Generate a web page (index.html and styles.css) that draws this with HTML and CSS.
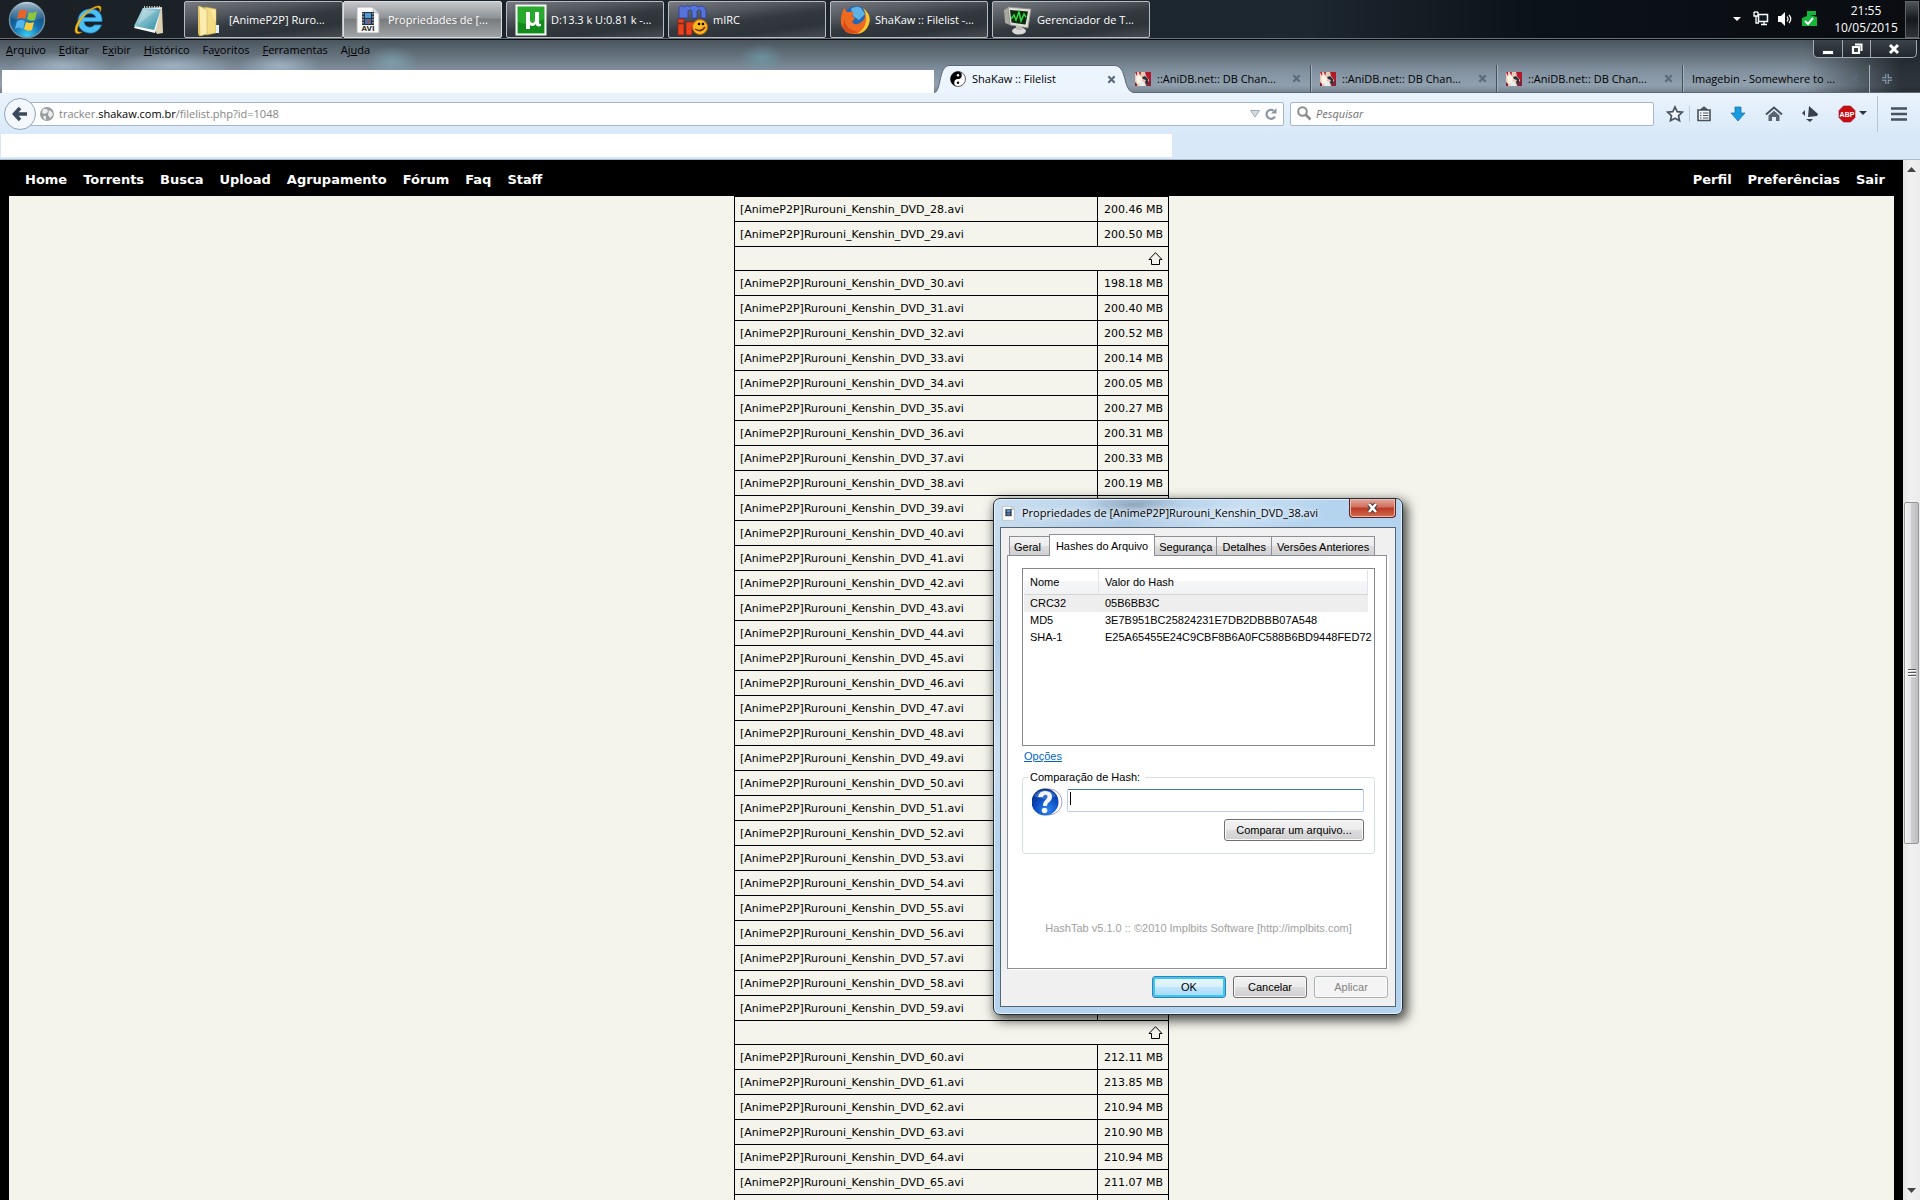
FILE: index.html
```html
<!DOCTYPE html>
<html lang="pt-BR">
<head>
<meta charset="utf-8">
<title>ShaKaw :: Filelist</title>
<link rel="stylesheet" href="styles.css">
</head>
<body>
<svg class="defs" aria-hidden="true">
  <symbol id="close-x" viewBox="0 0 10 10"><path d="M1.5 1.5l7 7M8.5 1.5l-7 7" stroke="currentColor" stroke-width="2.4"/></symbol>
  <symbol id="anidb" viewBox="0 0 16 14"><path fill="#e9c9b4" d="M0 0h16v14H0z"/><path fill="#b3182d" d="M10 0h6v14h-3l1-6-3-4zM0 0h2v4zM4 0h2L5 5z"/><path fill="#fff3e6" d="M1 5l3-3 3 4-1 5-4 1zM7 4h3l1 2-2 1z"/><path fill="#27303c" d="M7 5l3-1 3 3v4l-2 2-1-3 1-2-3-1z"/><path fill="#e8edf2" d="M6 9l3 1 1 4H4z"/><path fill="#812235" d="M0 10l2 2v2H0zM12 11l4-4v7h-5z"/></symbol>
  <symbol id="up-arrow" viewBox="0 0 15 13"><path d="M7.500.7L14 7.500H11.500V12.500H3.500V7.500H1z" fill="none" stroke="#000"/></symbol>
  <symbol id="avi" viewBox="0 0 24 28"><path d="M1 1h16l6 6v20H1z" fill="#fafafa" stroke="#a9adb0"/><path d="M17 1v6h6z" fill="#d6dadd" stroke="#aaa" stroke-width=".6"/><path d="M6 6h12v13H6z" fill="#26323f"/><path d="M9 7h6v5H9z" fill="#4f9bd4"/><path d="M9 13h6v5H9z" fill="#3a76b8"/><path d="M10 16l3-3 1 4z" fill="#c64b35"/><path d="M7 7v12M17 7v12" stroke="#eee" stroke-dasharray="1.500 1.500"/></symbol>
</svg>

<header class="taskbar">
  <div class="launchers">
    <button class="launch" aria-label="Iniciar">
      <svg width="38" height="38" viewBox="0 0 38 38"><defs><radialGradient id="orb" cx=".5" cy=".95" r=".9"><stop offset="0" stop-color="#38d0f8"/><stop offset=".45" stop-color="#1670ad"/><stop offset="1" stop-color="#113a63"/></radialGradient><linearGradient id="orbShine" x2="0" y2="1"><stop stop-color="#e4f1f8" stop-opacity=".75"/><stop offset="1" stop-color="#8fb6cc" stop-opacity=".12"/></linearGradient></defs><circle cx="19" cy="19" r="17.500" fill="url(#orb)" stroke="#6f8da0" stroke-width="1.500"/><path d="M3 17a16 16 0 0132 0Q19 23 3 17z" fill="url(#orbShine)"/><path d="M11 10q4-3 8 0l-2 8q-4-2-8 0z" fill="#e8622c"/><path d="M21 11q4 2 8-1l-2 9q-4 2-8-1z" fill="#8cc63f"/><path d="M9 20q4-2 8 0l-2 8q-4-3-8 0z" fill="#55b5ee"/><path d="M18 21q4 2 8 0l-2 8q-4 2-8-1z" fill="#fccb3a"/></svg>
    </button>
    <button class="launch" aria-label="Internet Explorer">
      <svg width="32" height="32" viewBox="0 0 32 32"><path d="M29 17.500H11c.4 6 7 7.400 10.500 3.500h7C26 27 21 29.500 16.500 29 9 28.500 4.500 23 5 16.500 5.500 9.500 11 5 17.500 5 25 5 29.500 10 29 17.500zM11.200 13.500h11.600c-.7-5-10.400-5.600-11.600 0z" fill="#4cc0f2" stroke="#1e86cc" stroke-width=".8"/><path d="M27 8c2-4 1-6.500-2-6C17 3 3 15 2 26c0 4 3 4.500 7 2-4 .8-5.500-.8-4.500-4C7 15 15 6.500 23 3.800c3-1 4.300.7 4 4.200z" fill="#fcc419" stroke="#c58c10" stroke-width=".6"/></svg>
    </button>
    <button class="launch" aria-label="Bloco de notas">
      <svg width="32" height="32" viewBox="0 0 32 32"><defs><linearGradient id="note" x2="1" y2="1"><stop stop-color="#c7e6ec"/><stop offset="1" stop-color="#2b8ba3"/></linearGradient></defs><path d="M11 4l19-1 1 26-6 1z" fill="#ddd2b0"/><path d="M11 4h18l-6 25-21-5z" fill="#f6fbfb"/><path d="M11 4l18 1-7 21-20-4z" fill="url(#note)"/><path d="M12 3h17" stroke="#c9c9c9" stroke-width="2" stroke-dasharray="1 1.500"/><path d="M12 6l12 1-18 13z" fill="#fff" opacity=".25"/></svg>
    </button>
  </div>
  <nav class="tasks" aria-label="Janelas abertas">
    <div class="task-group">
    <button class="task">
      <span class="task-icon"><svg width="32" height="32" viewBox="0 0 32 32"><path d="M5 2l8 2v26l-7 2-1-3z" fill="#e6c65c"/><path d="M12 3l11 2v24l-10 2z" fill="#f3dc84" stroke="#c8a746" stroke-width=".6"/><path d="M6 2l8 4v24l-7 2z" fill="#fbedb0" stroke="#d0b35b" stroke-width=".6"/><path d="M23 21h3v8h-3z" fill="#e1eef5"/><path d="M17 5l6 1v13z" fill="#fff2b5" opacity=".6"/></svg></span>
      <span>[AnimeP2P] Ruro...</span></button>
    <button class="task task-active">
      <span class="task-icon avi-icon"><svg width="24" height="28"><use href="#avi"/></svg><b>AVI</b></span>
      <span>Propriedades de [...</span></button>
    </div>
    <button class="task">
      <span class="task-icon"><svg width="32" height="32" viewBox="0 0 32 32"><path d="M1.500 1.500h29v29h-29z" fill="#28a82c" stroke="#f6f6f6" stroke-width="2"/><path d="M3 18q13 5 26-3v14H3z" fill="#138a1c"/><path d="M11 25V8h4v8c0 4 5 4 5 0V8h4v10c0 2 1 2 2 2v2c-3 1-5 0-5.500-2-1.500 2.500-4 2.500-5.500 1v4z" fill="#fff"/></svg></span>
      <span>D:13.3 k U:0.81 k -...</span></button>
    <button class="task">
      <span class="task-icon"><svg width="32" height="32" viewBox="0 0 32 32"><path d="M2 14V4q2-4 5-1 3-3 6 0 3-4 8 0 5-3 8 3v8h-5V7q-2-3-4 0v7h-5V7q-2-3-4 0v7z" fill="#5573d8" stroke="#27409a" stroke-width=".8"/><path d="M1 15h6v4H1zM1 20h6v11H1zM9 18h10v5h-4v8H9z" fill="#e8421c" stroke="#8f1e08" stroke-width=".7"/><circle cx="23" cy="23" r="7.500" fill="#fbb91e" stroke="#c0620c"/><path d="M18 25q6 4 10-2" fill="none" stroke="#702b08" stroke-width="1.500"/><circle cx="22" cy="20" r="1.300"/><circle cx="26" cy="20" r="1.300"/></svg></span>
      <span>mIRC</span></button>
    <button class="task">
      <span class="task-icon"><svg width="32" height="32" viewBox="0 0 32 32"><circle cx="17" cy="14" r="12" fill="#2667b5"/><path d="M12 5q5-4 10-1l4 6-6 6-6-4z" fill="#5fb3e4"/><path d="M5 4l3 4 7 0-2 4 3 2-3 4q3 4 8 1 6-3 5-10 4 4 3 9-2 10-12 12Q5 31 2 20 1 12 5 4z" fill="#ed6a20"/><path d="M24 4q9 7 6 16-3 9-12 10 8-5 9-13 1-7-3-13z" fill="#fbc52d"/><path d="M5 15q2 11 14 13-10 4-15-4z" fill="#c93a16" opacity=".6"/></svg></span>
      <span>ShaKaw :: Filelist -...</span></button>
    <button class="task">
      <span class="task-icon"><svg width="32" height="32" viewBox="0 0 32 32"><path d="M3 6l5-3 1 18-5-2z" fill="#a8a8a0"/><path d="M7 3l23 2-3 19-18-3z" fill="#deded6" stroke="#8a8a84" stroke-width=".8"/><path d="M9 6l18 1.500-2.500 13-14-2z" fill="#0c2b10"/><path d="M10 15l3-4 2 5 3-8 2 9 3-7 2 3" fill="none" stroke="#38d640" stroke-width="1.500"/><ellipse cx="18" cy="27" rx="7" ry="3.500" fill="#d9d9d6"/><path d="M15 22h6v4h-6z" fill="#bdbdb9"/></svg></span>
      <span>Gerenciador de T...</span></button>
  </nav>
  <div class="tray">
    <svg width="8" height="4" viewBox="0 0 8 4"><path d="M0 0h8L4 4z" fill="#fff"/></svg>
    <svg class="tray-net" width="16" height="16" viewBox="0 0 16 16"><path d="M5.500 3.500h9v7h-9z" fill="#111a22" stroke="#fff" stroke-width="1.500"/><path d="M8 13.500h6M11 11v3M1 1v4h4V1M3 5v7h3M2 0v2M4 0v2" stroke="#fff" fill="none" stroke-width="1.300"/></svg>
    <svg width="16" height="16" viewBox="0 0 16 16"><path d="M1 5h3l4-4v14l-4-4H1z" fill="#fff"/><path d="M10 5.500q2 2.500 0 5M12 4q3.500 4 0 8" fill="none" stroke="#fff" stroke-width="1.200"/></svg>
    <svg width="17" height="17" viewBox="0 0 17 17"><path d="M1 8l5-2V1h9v4H9l7 2v9H1z" fill="#15b53d"/><path d="M4 11l3 3 5-6" fill="none" stroke="#fff" stroke-width="2"/></svg>
    <time class="clock">21:55<br>10/05/2015</time>
  </div>
  <button class="show-desktop" aria-label="Mostrar área de trabalho"></button>
</header>

<div class="browser-top">
  <div class="menu-line">
    <nav class="menus" aria-label="Menu">
      <button><u>A</u>rquivo</button><button><u>E</u>ditar</button><button>E<u>x</u>ibir</button><button><u>H</u>istórico</button><button>Fa<u>v</u>oritos</button><button><u>F</u>erramentas</button><button>Aj<u>u</u>da</button>
    </nav>
    <div class="win-buttons">
      <button aria-label="Minimizar"><svg width="12" height="12"><path d="M.5 7.500h11v4H.5z" fill="#fff" stroke="#333b4a"/></svg></button>
      <button aria-label="Restaurar"><svg width="12" height="12" viewBox="0 0 12 12"><path d="M4 1.500h6.500V8" fill="none" stroke="#fff" stroke-width="2"/><path d="M2 4h6v6H2z" fill="#323a46" stroke="#fff" stroke-width="2.200"/></svg></button>
      <button class="win-close" aria-label="Fechar"><svg width="12" height="12" viewBox="0 0 12 12"><path d="M2 2l8 8M10 2l-8 8" stroke="#fff" stroke-width="3"/></svg></button>
    </div>
  </div>
  <div class="tab-line">
    <div class="blank-tabs"></div>
    <div class="tab tab-on">
      <svg class="tab-shape" width="200" height="28" viewBox="0 0 200 28"><path d="M0 28C8 26 4 0 16 0.500H180C194 0.500 188 26 200 27.500V29H0z" fill="#ecf4fd" stroke="#59677a"/></svg>
      <svg class="fav" width="16" height="16" viewBox="0 0 16 16"><circle cx="8" cy="8" r="7.500" fill="#fff" stroke="#222" stroke-width=".7"/><path d="M8 .5a7.500 7.500 0 000 15 3.750 3.750 0 010-7.500 3.750 3.750 0 000-7.500z"/><circle cx="8" cy="4.200" r="1.200" fill="#fff"/><circle cx="8" cy="11.800" r="1.200"/></svg>
      <span>ShaKaw :: Filelist</span>
      <button aria-label="Fechar aba"><svg width="9" height="9"><use href="#close-x"/></svg></button>
    </div>
    <div class="tab tab-first"><svg class="fav" width="16" height="14"><use href="#anidb"/></svg><span>::AniDB.net:: DB Chan...</span><button aria-label="Fechar aba"><svg width="9" height="9"><use href="#close-x"/></svg></button></div>
    <div class="tab"><svg class="fav" width="16" height="14"><use href="#anidb"/></svg><span>::AniDB.net:: DB Chan...</span><button aria-label="Fechar aba"><svg width="9" height="9"><use href="#close-x"/></svg></button></div>
    <div class="tab"><svg class="fav" width="16" height="14"><use href="#anidb"/></svg><span>::AniDB.net:: DB Chan...</span><button aria-label="Fechar aba"><svg width="9" height="9"><use href="#close-x"/></svg></button></div>
    <div class="tab"><span>Imagebin - Somewhere to ...</span><button aria-label="Fechar aba"><svg width="9" height="9"><use href="#close-x"/></svg></button></div>
    <button class="new-tab" aria-label="Nova aba"><svg width="12" height="12" viewBox="0 0 12 12"><path d="M6 1v10M1 6h10" stroke="#93a4b4" stroke-width="3.500"/><path d="M6 1v10M1 6h10" stroke="#3b4a58" stroke-width="1.500"/></svg></button>
  </div>
</div>

<div class="toolbar">
  <div class="tool-line">
    <button class="back" aria-label="Voltar"><svg width="16" height="16" viewBox="0 0 16 16"><path d="M8 2L2.500 8 8 14M3 8h12" fill="none" stroke="#3a4a5b" stroke-width="3.600"/></svg></button>
    <div class="urlbar">
      <svg width="14" height="14" viewBox="0 0 14 14"><circle cx="7" cy="7" r="7" fill="#9a9da0"/><path d="M3 2l4 0 1 3-3 2-3-1zM9 3l3 2 1 3-3 3-2-3zM3 9l3 0 0 4-2-1z" fill="#eceded"/></svg>
      <span class="url">tracker.<b>shakaw.com.br</b>/filelist.php?id=1048</span>
      <svg width="10" height="8" viewBox="0 0 10 8"><path d="M.5.5h9L5 7z" fill="#d3dae2" stroke="#9cabb9"/></svg>
      <button aria-label="Recarregar"><svg width="12" height="12" viewBox="0 0 12 12"><path d="M10 8.500A4.500 4.500 0 118.500 2.500" fill="none" stroke="#8797a7" stroke-width="2.200"/><path d="M11.500 0v5.500H6z" fill="#8797a7"/></svg></button>
    </div>
    <label class="search">
      <svg width="15" height="15" viewBox="0 0 15 15"><circle cx="5.500" cy="5.500" r="4.300" fill="none" stroke="#8c8c8c" stroke-width="2"/><path d="M8.500 8.500l5 5" stroke="#8c8c8c" stroke-width="2.600"/></svg>
      <input type="text" placeholder="Pesquisar" aria-label="Pesquisar">
    </label>
    <div class="tools">
      <button aria-label="Favoritar"><svg width="18" height="18" viewBox="0 0 18 18"><path d="M9 2l2.200 4.600 5 .6-3.700 3.500 1 5L9 13.200l-4.500 2.500 1-5L1.800 7.200l5-.6z" fill="#f3f7fb" stroke="#46525e" stroke-width="1.700"/></svg></button>
      <button class="tool-sep" aria-label="Favoritos"><svg width="16" height="16" viewBox="0 0 16 16"><path d="M2 4h12v10.500H2z" fill="#f3f7fb" stroke="#46525e" stroke-width="1.600"/><path d="M4.500 3.500L8 .8l3.500 2.700z" fill="#46525e" stroke="#46525e"/><path d="M4 7h1.500M7 7h5.500M4 9.500h1.500M7 9.500h5.500M4 12h1.500M7 12h5.500" stroke="#46525e" stroke-width="1.200"/></svg></button>
      <button aria-label="Downloads"><svg width="16" height="16" viewBox="0 0 16 16"><path d="M5 1h6v6h4l-7 8-7-8h4z" fill="#1b9bdf" stroke="#0f6ca6" stroke-width=".7"/></svg></button>
      <button aria-label="Início"><svg width="18" height="16" viewBox="0 0 18 16"><path d="M1 8.500L9 1.500l8 7" fill="none" stroke="#46525e" stroke-width="2"/><path d="M3.500 9.500L9 4.800l5.500 4.700V15H11v-4H7v4H3.500z" fill="#5a6570"/></svg></button>
      <button aria-label="Extensão"><svg width="18" height="17" viewBox="0 0 18 17"><path d="M8 1l9 8-1 2-9 1z" fill="#39424c"/><path d="M4 5v6L1 8zM5 14h7l-3 3z" fill="#39424c"/></svg></button>
      <button class="abp" aria-label="Adblock Plus"><svg width="18" height="18" viewBox="0 0 18 18"><path d="M5.500 1h7L17 5.500v7L12.500 17h-7L1 12.500v-7z" fill="#c90d14" stroke="#9b0a10" stroke-width=".6"/><text x="9" y="12" text-anchor="middle" font-family="Liberation Sans, sans-serif" font-size="7" font-weight="bold" fill="#fff">ABP</text></svg><svg width="8" height="5"><path d="M0 0h8L4 4z" fill="#2c3640"/></svg></button>
      <button class="menu-button" aria-label="Abrir menu"><svg width="16" height="14" viewBox="0 0 16 14"><path d="M0 1.500h16M0 7h16M0 12.500h16" stroke="#46525e" stroke-width="2.400"/></svg></button>
    </div>
  </div>
  <div class="blank-bookmarks"></div>
</div>

<div class="viewport">
  <main class="page">
    <nav class="site-nav">
      <div><a href="#home">Home</a><a href="#torrents">Torrents</a><a href="#busca">Busca</a><a href="#upload">Upload</a><a href="#agrupamento">Agrupamento</a><a href="#forum">Fórum</a><a href="#faq">Faq</a><a href="#staff">Staff</a></div>
      <div><a href="#perfil">Perfil</a><a href="#preferencias">Preferências</a><a href="#sair">Sair</a></div>
    </nav>
    <div class="content">
      <table class="files">
        <colgroup><col><col class="size"></colgroup>
        <tbody>
        <tr><td>[AnimeP2P]Rurouni_Kenshin_DVD_28.avi</td><td>200.46 MB</td></tr>
        <tr><td>[AnimeP2P]Rurouni_Kenshin_DVD_29.avi</td><td>200.50 MB</td></tr>
        <tr class="top-row"><td colspan="2"><a href="#home" aria-label="Topo"><svg width="15" height="13"><use href="#up-arrow"/></svg></a></td></tr>
        <tr><td>[AnimeP2P]Rurouni_Kenshin_DVD_30.avi</td><td>198.18 MB</td></tr>
        <tr><td>[AnimeP2P]Rurouni_Kenshin_DVD_31.avi</td><td>200.40 MB</td></tr>
        <tr><td>[AnimeP2P]Rurouni_Kenshin_DVD_32.avi</td><td>200.52 MB</td></tr>
        <tr><td>[AnimeP2P]Rurouni_Kenshin_DVD_33.avi</td><td>200.14 MB</td></tr>
        <tr><td>[AnimeP2P]Rurouni_Kenshin_DVD_34.avi</td><td>200.05 MB</td></tr>
        <tr><td>[AnimeP2P]Rurouni_Kenshin_DVD_35.avi</td><td>200.27 MB</td></tr>
        <tr><td>[AnimeP2P]Rurouni_Kenshin_DVD_36.avi</td><td>200.31 MB</td></tr>
        <tr><td>[AnimeP2P]Rurouni_Kenshin_DVD_37.avi</td><td>200.33 MB</td></tr>
        <tr><td>[AnimeP2P]Rurouni_Kenshin_DVD_38.avi</td><td>200.19 MB</td></tr>
        <tr><td>[AnimeP2P]Rurouni_Kenshin_DVD_39.avi</td><td></td></tr>
        <tr><td>[AnimeP2P]Rurouni_Kenshin_DVD_40.avi</td><td></td></tr>
        <tr><td>[AnimeP2P]Rurouni_Kenshin_DVD_41.avi</td><td></td></tr>
        <tr><td>[AnimeP2P]Rurouni_Kenshin_DVD_42.avi</td><td></td></tr>
        <tr><td>[AnimeP2P]Rurouni_Kenshin_DVD_43.avi</td><td></td></tr>
        <tr><td>[AnimeP2P]Rurouni_Kenshin_DVD_44.avi</td><td></td></tr>
        <tr><td>[AnimeP2P]Rurouni_Kenshin_DVD_45.avi</td><td></td></tr>
        <tr><td>[AnimeP2P]Rurouni_Kenshin_DVD_46.avi</td><td></td></tr>
        <tr><td>[AnimeP2P]Rurouni_Kenshin_DVD_47.avi</td><td></td></tr>
        <tr><td>[AnimeP2P]Rurouni_Kenshin_DVD_48.avi</td><td></td></tr>
        <tr><td>[AnimeP2P]Rurouni_Kenshin_DVD_49.avi</td><td></td></tr>
        <tr><td>[AnimeP2P]Rurouni_Kenshin_DVD_50.avi</td><td></td></tr>
        <tr><td>[AnimeP2P]Rurouni_Kenshin_DVD_51.avi</td><td></td></tr>
        <tr><td>[AnimeP2P]Rurouni_Kenshin_DVD_52.avi</td><td></td></tr>
        <tr><td>[AnimeP2P]Rurouni_Kenshin_DVD_53.avi</td><td></td></tr>
        <tr><td>[AnimeP2P]Rurouni_Kenshin_DVD_54.avi</td><td></td></tr>
        <tr><td>[AnimeP2P]Rurouni_Kenshin_DVD_55.avi</td><td></td></tr>
        <tr><td>[AnimeP2P]Rurouni_Kenshin_DVD_56.avi</td><td></td></tr>
        <tr><td>[AnimeP2P]Rurouni_Kenshin_DVD_57.avi</td><td></td></tr>
        <tr><td>[AnimeP2P]Rurouni_Kenshin_DVD_58.avi</td><td></td></tr>
        <tr><td>[AnimeP2P]Rurouni_Kenshin_DVD_59.avi</td><td></td></tr>
        <tr class="top-row"><td colspan="2"><a href="#home" aria-label="Topo"><svg width="15" height="13"><use href="#up-arrow"/></svg></a></td></tr>
        <tr><td>[AnimeP2P]Rurouni_Kenshin_DVD_60.avi</td><td>212.11 MB</td></tr>
        <tr><td>[AnimeP2P]Rurouni_Kenshin_DVD_61.avi</td><td>213.85 MB</td></tr>
        <tr><td>[AnimeP2P]Rurouni_Kenshin_DVD_62.avi</td><td>210.94 MB</td></tr>
        <tr><td>[AnimeP2P]Rurouni_Kenshin_DVD_63.avi</td><td>210.90 MB</td></tr>
        <tr><td>[AnimeP2P]Rurouni_Kenshin_DVD_64.avi</td><td>210.94 MB</td></tr>
        <tr><td>[AnimeP2P]Rurouni_Kenshin_DVD_65.avi</td><td>211.07 MB</td></tr>
        <tr><td></td><td></td></tr>
        </tbody>
      </table>
    </div>
  </main>
  <div class="scrollbar" aria-hidden="true">
    <svg width="9" height="5"><path d="M4.500 0L9 5H0z" fill="#444"/></svg>
    <div class="track"><div class="thumb"><i></i><i></i><i></i></div></div>
    <svg width="9" height="5"><path d="M0 0h9L4.500 5z" fill="#444"/></svg>
  </div>
</div>

<section class="dialog" role="dialog" aria-labelledby="dialog-title">
  <header class="dialog-title">
    <svg width="13" height="15" viewBox="0 0 24 28"><use href="#avi"/></svg>
    <h1 id="dialog-title">Propriedades de [AnimeP2P]Rurouni_Kenshin_DVD_38.avi</h1>
    <button class="dialog-close" aria-label="Fechar"><svg width="13" height="12" viewBox="0 0 13 12"><path d="M3 2l7 8M10 2l-7 8" stroke="#4a3434" stroke-width="4.500"/><path d="M3 2l7 8M10 2l-7 8" stroke="#fff" stroke-width="2.600"/></svg></button>
  </header>
  <div class="dialog-body">
    <div class="dialog-tabs" role="tablist">
      <button role="tab">Geral</button><button role="tab" class="selected" aria-selected="true">Hashes do Arquivo</button><button role="tab">Segurança</button><button role="tab">Detalhes</button><button role="tab">Versões Anteriores</button>
    </div>
    <div class="panel">
      <div class="hash-list">
        <table>
          <colgroup><col class="name"><col></colgroup>
          <thead><tr><th>Nome</th><th>Valor do Hash</th></tr></thead>
          <tbody>
            <tr class="current"><td>CRC32</td><td>05B6BB3C</td></tr>
            <tr><td>MD5</td><td>3E7B951BC25824231E7DB2DBBB07A548</td></tr>
            <tr><td>SHA-1</td><td>E25A65455E24C9CBF8B6A0FC588B6BD9448FED72</td></tr>
          </tbody>
        </table>
      </div>
      <a class="options" href="#opcoes">Opções</a>
      <fieldset>
        <legend><label for="hash">Comparação de Hash:</label></legend>
        <div class="compare">
          <svg width="32" height="32" viewBox="0 0 32 32"><defs><radialGradient id="ask" cx=".6" cy=".8" r=".8"><stop stop-color="#2b86ee"/><stop offset=".6" stop-color="#0c49bd"/><stop offset="1" stop-color="#072c84"/></radialGradient></defs><circle cx="17" cy="16" r="13" fill="#fff" stroke="#a6a4d4"/><circle cx="13" cy="16" r="13.500" fill="url(#ask)"/><path d="M2 10a13 13 0 0122 0q-12 6-22 0z" fill="#6fa0e8" opacity=".45"/><path d="M6 11q1-6 7-6 7 0 7 6c0 5-5 5-5 9h-4c0-6 4.500-6.500 4.500-9.500 0-2.500-4-2.500-4.500.5z" fill="#f4f6fb"/><circle cx="12.500" cy="24.500" r="2.800" fill="#f4f6fb"/></svg>
          <div class="hash-field"><input id="hash" type="text"><i class="caret"></i></div>
        </div>
        <button class="push compare-file">Comparar um arquivo...</button>
      </fieldset>
      <p class="credit">HashTab v5.1.0 :: ©2010 Implbits Software [http://implbits.com]</p>
    </div>
    <div class="dialog-buttons"><button class="push default">OK</button><button class="push">Cancelar</button><button class="push" disabled>Aplicar</button></div>
  </div>
</section>
</body>
</html>
```
FILE: styles.css
```css
* { box-sizing: border-box; }
html, body { height: 100%; }
body {
  margin: 0;
  display: flex;
  flex-direction: column;
  overflow: hidden;
  font: 11px/16px "Open Sans", "Noto Sans", sans-serif;
  color: #000;
}
button { font: inherit; color: inherit; background: none; border: 0; padding: 0; margin: 0; }
svg { display: block; flex: none; }
.defs { position: absolute; width: 0; height: 0; }

/* Windows taskbar */
.taskbar {
  display: flex;
  height: 40px;
  flex: none;
  background: linear-gradient(90deg, #1a2026, #1d262e 50%, #1d272f 68%, #0b1219 80%, #0a0c10);
  border-bottom: 1px solid #050709;
  box-shadow: inset 0 -1px #66717a;
  color: #fff;
}
.launchers { display: flex; align-items: center; gap: 27px; width: 184px; padding-left: 8px; }
.tasks { display: flex; gap: 4px; padding-top: 1px; height: 38px; }
.task-group { display: flex; }
.task {
  display: flex;
  align-items: center;
  gap: 4px;
  width: 158px;
  padding-left: 8px;
  border: 1px solid #b8bcc0;
  border-radius: 2px;
  background: linear-gradient(172deg, #777a80, #53575e 30%, #33393f 52%, #2c3339 75%, #474c51);
  white-space: nowrap;
}
.task-group .task { width: 159px; }
.task-group .task-active { background: linear-gradient(#c4c6c8, #909396 45%, #797c7e 50%, #a0a3a5); border-color: #dcdfe1; }
.task-icon { width: 32px; height: 32px; }
.avi-icon { display: flex; align-items: center; flex-direction: column; padding-top: 2px; }
.avi-icon b { font: bold 7px/7px "DejaVu Sans", sans-serif; color: #333; margin-top: -8px; }
.tray { display: flex; align-items: center; gap: 8px; margin-left: auto; padding-bottom: 2px; }
.tray-net { margin-left: 4px; }
.clock { width: 72px; margin-left: 4px; text-align: center; font-size: 12px; line-height: 17px; }
.show-desktop { width: 14px; margin: 1px 1px 1px 3px; border: 1px solid #60666c; background: linear-gradient(#4d5359, #15191d 50%, #30353a); }

/* Firefox frame */
.browser-top {
  flex: none;
  height: 53px;
  background:
    linear-gradient(90deg, transparent 94%, rgba(12, 16, 20, .75) 99%),
    radial-gradient(ellipse 50px 14px at 62px 26px, rgba(175, 195, 212, .7), transparent),
    radial-gradient(ellipse 60px 14px at 174px 26px, rgba(175, 195, 212, .7), transparent),
    radial-gradient(ellipse 40px 14px at 280px 26px, rgba(175, 195, 212, .7), transparent),
    radial-gradient(ellipse 26px 16px at 392px 22px, rgba(130, 175, 190, .6), transparent),
    radial-gradient(ellipse 22px 14px at 762px 18px, rgba(110, 165, 180, .6), transparent),
    linear-gradient(#4a555d, #66737e 30%, #8392a0 60%, #91a0ae 85%, #75828f);
}
.menu-line { display: flex; justify-content: space-between; height: 25px; }
.menus { display: flex; gap: 13px; padding-left: 6px; height: 20px; text-shadow: 0 0 5px #ccd3da, 0 0 5px #b9c1c9; }
.win-buttons { display: flex; height: 18px; margin-right: 3px; border: 1px solid #a3abb2; border-top: 0; border-radius: 0 0 5px 5px; background: linear-gradient(#3a4148, #22282e); }
.win-buttons button { width: 28px; display: grid; place-items: center; }
.win-buttons button + button { border-left: 1px solid #a3abb2; }
.win-buttons .win-close { width: 46px; }
.tab-line { display: flex; height: 28px; align-items: stretch; }
.blank-tabs { flex: 1; margin: 5px 0 0 2px; background: #fff; }
.tab { position: relative; display: flex; align-items: center; width: 186px; padding: 0 9px; gap: 6px; border-right: 1px solid #45525e; border-bottom: 1px solid #5b6976; box-shadow: 1px 0 #a4b1bd; white-space: nowrap; }
.tab > * { position: relative; }
.tab > button { margin-left: auto; color: #5b6b7a; }
.tab .tab-shape { position: absolute; left: 0; top: 0; }
.tab-on { width: 190px; padding: 0 8px 0 16px; border: 0; box-shadow: none; z-index: 1; }
.tab-first { padding-left: 11px; width: 187px; }
.new-tab { width: 51px; display: flex; align-items: center; padding-left: 12px; border-bottom: 1px solid #5b6976; }

.toolbar { flex: none; height: 67px; background: linear-gradient(#eaf3fc, #d8e8f8 45px); border-bottom: 1px solid #a9bccd; }
.tool-line { display: flex; align-items: center; height: 41px; padding-left: 4px; }
.back { position: relative; z-index: 1; width: 32px; height: 32px; display: grid; place-items: center; border: 1px solid #8fa3ba; border-radius: 50%; background: #f4f8fd; }
.urlbar, .search { display: flex; align-items: center; height: 24px; border: 1px solid #a3b6cb; border-radius: 2px; background: #fff; }
.urlbar { flex: 1; gap: 5px; margin-left: -8px; padding: 0 6px 0 11px; }
.url { flex: 1; color: #858585; }
.url b { color: #000; font-weight: 400; }
.search { width: 364px; margin-left: 6px; padding-left: 6px; gap: 4px; }
.search input { flex: 1; border: 0; outline: 0; padding: 0; background: none; font: inherit; }
.search input::placeholder { color: #707070; font-style: italic; opacity: 1; }
.tools { display: flex; align-items: center; justify-content: space-between; width: 266px; padding: 0 13px 0 12px; height: 100%; }
.tools .tool-sep { border-left: 1px solid #bccbdb; padding-left: 6px; margin-left: -14px; }
.abp { display: flex; align-items: center; gap: 3px; }
.menu-button { height: 36px; border-left: 1px solid #b7c5d3; padding-left: 13px; margin-left: -8px; }
.blank-bookmarks { width: 61%; height: 23px; margin-left: 1px; background: #fff; }

/* Site */
.viewport { flex: 1; min-height: 0; display: flex; }
.page { flex: 1; display: flex; flex-direction: column; background: #000; overflow: hidden; }
.site-nav { flex: none; display: flex; justify-content: space-between; align-items: center; height: 36px; padding: 4px 18px 0 25px; font: bold 13px/16px Verdana, "DejaVu Sans", sans-serif; }
.site-nav div { display: flex; gap: 16px; }
.site-nav a { color: #fff; text-decoration: none; }
.content { flex: 1; min-height: 0; margin: 0 9px; background: #f4f4ec; }
.files { width: 435px; margin: 0 auto; border-collapse: collapse; table-layout: fixed; font: 11px/14px Verdana, "DejaVu Sans", sans-serif; }
.files .size { width: 71px; }
.files td { height: 25px; padding: 2px 5px 0; border: 1px solid #000; white-space: nowrap; }
.files .top-row td { height: 24px; padding-top: 0; }
.files td:last-child { text-align: right; }
.top-row svg { margin-left: auto; }

.scrollbar { width: 17px; display: flex; flex-direction: column; align-items: center; padding: 7px 0; background: linear-gradient(90deg, #e3e3e3, #f1f1f1 40%, #ebebeb); }
.track { flex: 1; width: 100%; padding: 330px 1px 0; }
.thumb { height: 342px; display: flex; flex-direction: column; gap: 1px; align-items: center; justify-content: center; border: 1px solid #979797; border-radius: 2px; background: linear-gradient(90deg, #f5f5f5, #e4e4e6 45%, #cdcdd1 50%, #bdbdc2); }
.thumb i { width: 8px; height: 2px; background: #555; border-bottom: 1px solid #fff; }

/* Properties window */
.dialog {
  position: absolute;
  left: 993px;
  top: 498px;
  width: 410px;
  padding: 0 6px 7px;
  border: 1px solid #272e35;
  border-radius: 7px;
  background:
    radial-gradient(ellipse 50px 12px at 140px 6px, rgba(90, 110, 130, .4), transparent),
    linear-gradient(135deg, #cbdff0 0, #bfd7ec 60px, #b1cde7 110px, #c9dff3 180px, #b4d3ee 240px);
  box-shadow: inset 0 0 0 1px #e2f0fb, 3px 4px 12px 1px rgba(0, 0, 0, .75);
  font: 11px/14px "Liberation Sans", Arial, sans-serif;
}
.dialog-title { display: flex; align-items: center; height: 28px; gap: 7px; padding-left: 2px; }
.dialog-title h1 { flex: 1; margin: 0; font: 11px/16px "Open Sans", "Noto Sans", sans-serif; white-space: nowrap; text-shadow: 0 0 6px #fff, 0 0 6px #fff; }
.dialog-close { flex: none; align-self: flex-start; display: grid; place-items: center; width: 47px; height: 19px; border: 1px solid #5d2320; border-top: 0; border-radius: 0 0 4px 4px; background: linear-gradient(#e3a99d, #d0705f 45%, #bb3a23 50%, #cf6a4e); box-shadow: inset 0 0 0 1px #eab9ae; }
.dialog-body { border: 1px solid #566370; background: #f0f0f0; padding: 6px 7px 8px 6px; }
.dialog-tabs { display: flex; align-items: flex-end; height: 21px; padding-left: 2px; }
.dialog-tabs button { height: 19px; padding: 1px 4px 0; border: 1px solid #8c8f98; border-bottom: 0; background: linear-gradient(#f3f3f3, #ebebeb 50%, #dcdcdc 52%, #d0d0d0); white-space: nowrap; }
.dialog-tabs button:first-child { padding-right: 8px; border-right: 0; }
.dialog-tabs button:nth-child(n+4) { border-left: 0; padding: 1px 5px 0; }
.dialog-tabs .selected { height: 22px; padding: 0 6px; background: #fff; margin-bottom: -1px; z-index: 1; }
.dialog-tabs .selected + button { border-left: 0; padding: 1px 4px 0; }
.panel { height: 414px; width: 380px; padding: 12px 11px 0 14px; border: 1px solid #8c8f98; background: #fff; box-shadow: 2px 1px #fff; }
.hash-list { height: 178px; padding: 1px; border: 1px solid #828790; }
.hash-list table { width: calc(100% - 5px); border-collapse: separate; border-spacing: 0; table-layout: fixed; }
.hash-list .name { width: 75px; }
.hash-list th { height: 25px; padding: 0 6px; text-align: left; font-weight: 400; border-bottom: 1px solid #d5d5d5; border-right: 1px solid #e2e3ea; background: linear-gradient(#fff 45%, #f6f7f8 46%, #f1f2f4); }
.hash-list td { height: 17px; padding: 0 0 0 6px; line-height: 17px; white-space: nowrap; }
.hash-list .current td { background: #eee; }
.options { display: block; width: max-content; margin: 3px 0 0 2px; color: #0066cc; }
.panel fieldset { height: 84px; margin: 7px 0 0; padding: 5px 10px 0 9px; border: 1px solid #d5dfe5; border-radius: 3px; }
.panel legend { margin-left: -4px; padding: 0 5px 0 2px; }
.compare { display: flex; align-items: flex-start; gap: 3px; height: 32px; }
.compare svg { margin-top: -3px; }
.hash-field { position: relative; flex: 1; }
.hash-field input { display: block; width: 100%; height: 23px; padding: 0 4px; border: 1px solid #b5cfe7; border-top-color: #3d7bad; border-radius: 2px; outline: 0; font: inherit; }
.caret { position: absolute; left: 3px; top: 3px; width: 1px; height: 13px; background: #000; }
.push { width: 74px; height: 22px; border: 1px solid #707070; border-radius: 3px; background: linear-gradient(#f2f2f2, #ebebeb 49%, #dddddd 51%, #cfcfcf); box-shadow: inset 0 0 0 1px #fafafa; }
.push.default { border-color: #3c7fb1; background: linear-gradient(#eaf6fd, #d9f0fc 49%, #bee6fd 51%, #a7d9f5); box-shadow: inset 0 0 0 2px #36c9f5; }
.push:disabled { border-color: #adb2b5; color: #838383; background: #f4f4f4; }
.compare-file { display: block; width: 140px; margin: -2px 0 0 auto; }
.credit { margin: 67px 0 0; text-align: center; color: #a0a0a0; white-space: nowrap; }
.dialog-buttons { display: flex; justify-content: flex-end; gap: 7px; padding-top: 7px; }
```
